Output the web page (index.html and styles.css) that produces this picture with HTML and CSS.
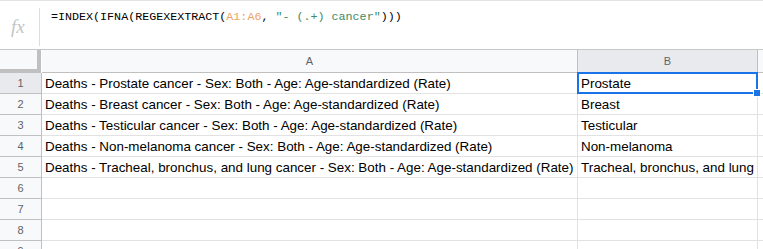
FILE: index.html
```html
<!DOCTYPE html>
<html lang="en">
<head>
    <meta charset="UTF-8">
    <title>Sheet</title>
    <link rel="stylesheet" href="styles.css">
</head>
<body>
<div class="formula-bar">
    <div class="fx">fx</div>
    <div class="formula">=INDEX(IFNA(REGEXEXTRACT(<span class="ref">A1:A6</span>, <span class="str">"- (.+) cancer"</span>)))</div>
</div>
<div class="grid">
    <div class="row head-row">
        <div class="corner"></div>
        <div class="col-head col-a">A</div>
        <div class="col-head col-b selected">B</div>
        <div class="col-head col-c"></div>
    </div>
    <div class="row">
        <div class="row-head selected">1</div>
        <div class="cell col-a">Deaths - Prostate cancer - Sex: Both - Age: Age-standardized (Rate)</div>
        <div class="cell col-b active">Prostate<span class="handle"></span></div>
        <div class="cell col-c"></div>
    </div>
    <div class="row">
        <div class="row-head">2</div>
        <div class="cell col-a">Deaths - Breast cancer - Sex: Both - Age: Age-standardized (Rate)</div>
        <div class="cell col-b">Breast</div>
        <div class="cell col-c"></div>
    </div>
    <div class="row">
        <div class="row-head">3</div>
        <div class="cell col-a">Deaths - Testicular cancer - Sex: Both - Age: Age-standardized (Rate)</div>
        <div class="cell col-b">Testicular</div>
        <div class="cell col-c"></div>
    </div>
    <div class="row">
        <div class="row-head">4</div>
        <div class="cell col-a">Deaths - Non-melanoma cancer - Sex: Both - Age: Age-standardized (Rate)</div>
        <div class="cell col-b">Non-melanoma</div>
        <div class="cell col-c"></div>
    </div>
    <div class="row">
        <div class="row-head">5</div>
        <div class="cell col-a">Deaths - Tracheal, bronchus, and lung cancer - Sex: Both - Age: Age-standardized (Rate)</div>
        <div class="cell col-b">Tracheal, bronchus, and lung</div>
        <div class="cell col-c"></div>
    </div>
    <div class="row">
        <div class="row-head">6</div>
        <div class="cell col-a"></div>
        <div class="cell col-b"></div>
        <div class="cell col-c"></div>
    </div>
    <div class="row">
        <div class="row-head">7</div>
        <div class="cell col-a"></div>
        <div class="cell col-b"></div>
        <div class="cell col-c"></div>
    </div>
    <div class="row">
        <div class="row-head">8</div>
        <div class="cell col-a"></div>
        <div class="cell col-b"></div>
        <div class="cell col-c"></div>
    </div>
    <div class="row">
        <div class="row-head">9</div>
        <div class="cell col-a"></div>
        <div class="cell col-b"></div>
        <div class="cell col-c"></div>
    </div>
</div>
</body>
</html>
```

FILE: styles.css
```css
body {
    margin: 0;
    background: #ffffff;
    font-family: "Liberation Sans", Arial, sans-serif;
    overflow: hidden;
}

.formula-bar {
    display: flex;
    height: 50px;
    border-top: 1px solid #e3e3e3;
    border-bottom: 1px solid #c7c7c7;
    box-sizing: border-box;
}

.fx {
    width: 40px;
    flex: none;
    box-sizing: border-box;
    margin-top: 7px;
    height: 38px;
    border-right: 1px solid #dadce0;
    font-family: "Liberation Serif", "Times New Roman", serif;
    font-style: italic;
    font-size: 19px;
    color: #c4c4c4;
    padding: 8px 0 0 11px;
}

.formula {
    font-family: "Liberation Mono", "Courier New", monospace;
    font-size: 11.7px;
    color: #000000;
    padding: 9px 0 0 11px;
    line-height: 14px;
    white-space: nowrap;
}

.formula .ref {
    color: #f0a262;
}

.formula .str {
    color: #3d8a62;
}

.row {
    display: flex;
    height: 21px;
}

.head-row {
    height: 23px;
}

.corner {
    width: 41px;
    flex: none;
    box-sizing: border-box;
    background: #f8f9fa;
    border-right: 4px solid #c0c0c0;
    border-bottom: 4px solid #c0c0c0;
    margin-right: 1px;
}

.col-head {
    box-sizing: border-box;
    background: #f8f9fa;
    border-right: 1px solid #c0c0c0;
    border-bottom: 1px solid #c0c0c0;
    font-size: 11px;
    color: #5f6368;
    text-align: center;
    line-height: 23px;
    flex: none;
}

.col-head.selected,
.row-head.selected {
    background: #e8eaed;
}

.col-a {
    width: 536px;
}

.col-b {
    width: 180px;
}

.row-head {
    width: 42px;
    flex: none;
    box-sizing: border-box;
    background: #f8f9fa;
    border-right: 1px solid #c0c0c0;
    border-bottom: 1px solid #c0c0c0;
    font-size: 11px;
    color: #5f6368;
    text-align: center;
    line-height: 20px;
}

.cell {
    box-sizing: border-box;
    border-right: 1px solid #e2e2e2;
    border-bottom: 1px solid #e2e2e2;
    font-size: 13.4px;
    color: #000000;
    line-height: 21px;
    padding: 0 3px;
    white-space: nowrap;
    overflow: hidden;
    flex: none;
    position: relative;
}

.col-head.col-c,
.cell.col-c {
    flex: 1;
    border-right: none;
}

.cell.active {
    overflow: visible;
}

.cell.active::before {
    content: "";
    position: absolute;
    left: -1px;
    top: -1px;
    right: -1px;
    bottom: -1px;
    border: 2px solid #1a73e8;
    pointer-events: none;
}

.handle {
    position: absolute;
    right: -4px;
    bottom: -4px;
    width: 6px;
    height: 6px;
    background: #1a73e8;
    border: 1px solid #ffffff;
    z-index: 2;
}
```
